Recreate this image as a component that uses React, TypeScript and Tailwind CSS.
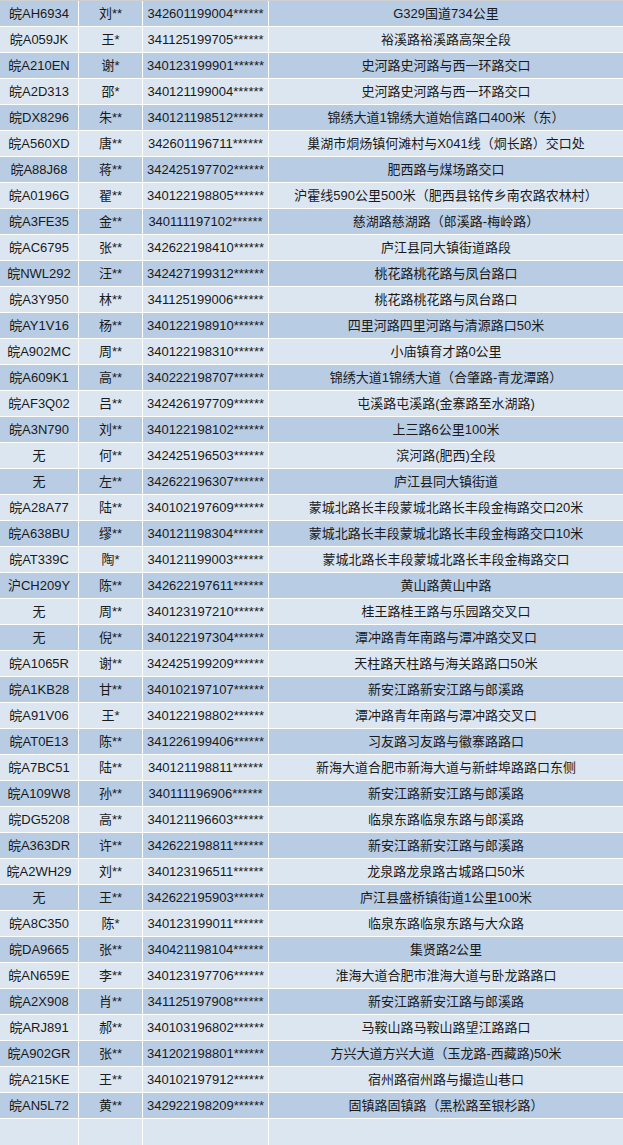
const ROWS: [string, string, string, string][] = [
  ['皖AH6934', '刘**', '342601199004******', 'G329国道734公里'],
  ['皖A059JK', '王*', '341125199705******', '裕溪路裕溪路高架全段'],
  ['皖A210EN', '谢*', '340123199901******', '史河路史河路与西一环路交口'],
  ['皖A2D313', '邵*', '340121199004******', '史河路史河路与西一环路交口'],
  ['皖DX8296', '朱**', '340121198512******', '锦绣大道1锦绣大道始信路口400米（东）'],
  ['皖A560XD', '唐**', '342601196711******', '巢湖市烔炀镇何滩村与X041线（烔长路）交口处'],
  ['皖A88J68', '蒋**', '342425197702******', '肥西路与煤场路交口'],
  ['皖A0196G', '翟**', '340122198805******', '沪霍线590公里500米（肥西县铭传乡南农路农林村）'],
  ['皖A3FE35', '金**', '340111197102******', '慈湖路慈湖路（郎溪路-梅岭路）'],
  ['皖AC6795', '张**', '342622198410******', '庐江县同大镇街道路段'],
  ['皖NWL292', '汪**', '342427199312******', '桃花路桃花路与凤台路口'],
  ['皖A3Y950', '林**', '341125199006******', '桃花路桃花路与凤台路口'],
  ['皖AY1V16', '杨**', '340122198910******', '四里河路四里河路与清源路口50米'],
  ['皖A902MC', '周**', '340122198310******', '小庙镇育才路0公里'],
  ['皖A609K1', '高**', '340222198707******', '锦绣大道1锦绣大道（合肇路-青龙潭路）'],
  ['皖AF3Q02', '吕**', '342426197709******', '屯溪路屯溪路(金寨路至水湖路)'],
  ['皖A3N790', '刘**', '340122198102******', '上三路6公里100米'],
  ['无', '何**', '342425196503******', '滨河路(肥西)全段'],
  ['无', '左**', '342622196307******', '庐江县同大镇街道'],
  ['皖A28A77', '陆**', '340102197609******', '蒙城北路长丰段蒙城北路长丰段金梅路交口20米'],
  ['皖A638BU', '缪**', '340121198304******', '蒙城北路长丰段蒙城北路长丰段金梅路交口10米'],
  ['皖AT339C', '陶*', '340121199003******', '蒙城北路长丰段蒙城北路长丰段金梅路交口'],
  ['沪CH209Y', '陈**', '342622197611******', '黄山路黄山中路'],
  ['无', '周**', '340123197210******', '桂王路桂王路与乐园路交叉口'],
  ['无', '倪**', '340122197304******', '潭冲路青年南路与潭冲路交叉口'],
  ['皖A1065R', '谢**', '342425199209******', '天柱路天柱路与海关路路口50米'],
  ['皖A1KB28', '甘**', '340102197107******', '新安江路新安江路与郎溪路'],
  ['皖A91V06', '王*', '340122198802******', '潭冲路青年南路与潭冲路交叉口'],
  ['皖AT0E13', '陈**', '341226199406******', '习友路习友路与徽寨路路口'],
  ['皖A7BC51', '陆**', '340121198811******', '新海大道合肥市新海大道与新蚌埠路路口东侧'],
  ['皖A109W8', '孙**', '340111196906******', '新安江路新安江路与郎溪路'],
  ['皖DG5208', '高**', '340121196603******', '临泉东路临泉东路与郎溪路'],
  ['皖A363DR', '许**', '342622198811******', '新安江路新安江路与郎溪路'],
  ['皖A2WH29', '刘**', '340123196511******', '龙泉路龙泉路古城路口50米'],
  ['无', '王**', '342622195903******', '庐江县盛桥镇街道1公里100米'],
  ['皖A8C350', '陈*', '340123199011******', '临泉东路临泉东路与大众路'],
  ['皖DA9665', '张**', '340421198104******', '集贤路2公里'],
  ['皖AN659E', '李**', '340123197706******', '淮海大道合肥市淮海大道与卧龙路路口'],
  ['皖A2X908', '肖**', '341125197908******', '新安江路新安江路与郎溪路'],
  ['皖ARJ891', '郝**', '340103196802******', '马鞍山路马鞍山路望江路路口'],
  ['皖A902GR', '张**', '341202198801******', '方兴大道方兴大道（玉龙路-西藏路)50米'],
  ['皖A215KE', '王**', '340102197912******', '宿州路宿州路与撮造山巷口'],
  ['皖AN5L72', '黄**', '342922198209******', '固镇路固镇路（黑松路至银杉路）'],
];

function Row({ cells, dark }: { cells: string[]; dark: boolean }) {
  const bg = dark ? 'bg-[#b8cce4]' : 'bg-[#dce6f1]';
  return (
    <div className="grid h-[25px] grid-cols-[78px_63px_125px_1fr] gap-x-px">
      {cells.map((c, i) => (
        <div
          key={i}
          className={`${bg} flex items-center justify-center overflow-hidden whitespace-nowrap`}
        >
          {c}
        </div>
      ))}
    </div>
  );
}

export default function App() {
  return (
    <div className="h-[1145px] w-[623px] overflow-hidden border-t border-[#d0d0d0] bg-white font-['Liberation_Sans','Noto_Sans_CJK_SC',sans-serif] text-[13px] leading-none text-[#1a1a1a]">
      <div className="flex flex-col gap-y-px">
        {ROWS.map((r, i) => (
          <Row key={i} cells={r} dark={i % 2 === 0} />
        ))}
        {/* 末尾空行 */}
        <div className="grid h-[26px] grid-cols-[78px_63px_125px_1fr] gap-x-px">
          <div className="bg-[#dce6f1]" />
          <div className="bg-[#dce6f1]" />
          <div className="bg-[#dce6f1]" />
          <div className="bg-[#dce6f1]" />
        </div>
      </div>
    </div>
  );
}
